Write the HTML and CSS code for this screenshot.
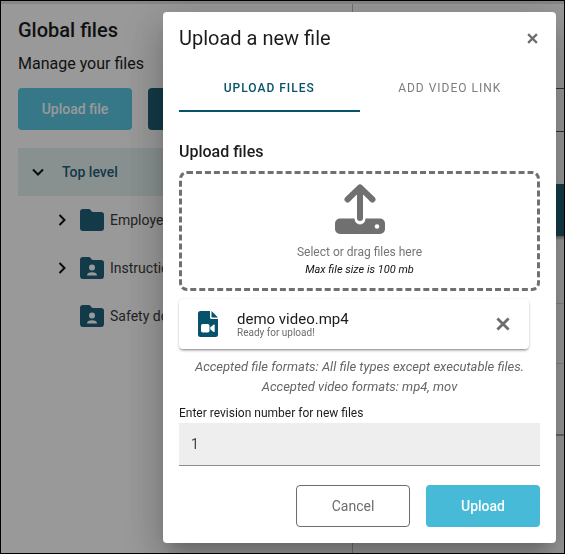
FILE: index.html
```html
<!DOCTYPE html>
<html lang="en">
<head>
<meta charset="utf-8">
<meta name="viewport" content="width=device-width, initial-scale=1">
<title>Global files</title>
<link rel="stylesheet" href="styles.css">
</head>
<body>
<div class="page">
  <aside class="sidebar">
    <h1 class="page-title">Global files</h1>
    <p class="page-subtitle">Manage your files</p>
    <div class="toolbar">
      <button class="btn btn-primary btn-page" type="button">Upload file</button>
      <button class="btn btn-dark" type="button">New folder</button>
    </div>
    <ul class="tree">
      <li class="node node-root">
        <svg class="chevron" viewBox="0 0 14 14"><path d="M2 4.500l5 5 5-5"/></svg>
        <span>Top level</span>
      </li>
      <li class="node">
        <svg class="chevron" viewBox="0 0 14 14"><path d="M4.500 2l5 5-5 5"/></svg>
        <svg class="folder" viewBox="0 0 24 22"><path d="M3 0h6.500l3 3H21a3 3 0 0 1 3 3v13a3 3 0 0 1-3 3H3a3 3 0 0 1-3-3V3a3 3 0 0 1 3-3z"/></svg>
        <span>Employees</span>
      </li>
      <li class="node">
        <svg class="chevron" viewBox="0 0 14 14"><path d="M4.500 2l5 5-5 5"/></svg>
        <svg class="folder" viewBox="0 0 24 22"><path d="M3 0h6.500l3 3H21a3 3 0 0 1 3 3v13a3 3 0 0 1-3 3H3a3 3 0 0 1-3-3V3a3 3 0 0 1 3-3z"/><circle class="cut" cx="12" cy="10.500" r="3"/><path class="cut" d="M7 18.500c0-2.300 2-3.300 5-3.300s5 1 5 3.300z"/></svg>
        <span>Instructions</span>
      </li>
      <li class="node">
        <span class="chevron"></span>
        <svg class="folder" viewBox="0 0 24 22"><path d="M3 0h6.500l3 3H21a3 3 0 0 1 3 3v13a3 3 0 0 1-3 3H3a3 3 0 0 1-3-3V3a3 3 0 0 1 3-3z"/><circle class="cut" cx="12" cy="10.500" r="3"/><path class="cut" d="M7 18.500c0-2.300 2-3.300 5-3.300s5 1 5 3.300z"/></svg>
        <span>Safety documents</span>
      </li>
    </ul>
  </aside>
  <main class="content">
    <div class="search"></div>
    <div class="file-list">
      <div class="file-head"></div>
      <div class="file-row file-row-first"></div>
      <div class="file-row"></div>
      <div class="file-foot"></div>
    </div>
  </main>
</div>

<div class="overlay">
  <form class="dialog" role="dialog" aria-labelledby="dialog-title">
    <header class="dialog-head">
      <h2 class="dialog-title" id="dialog-title">Upload a new file</h2>
      <button class="icon-btn" type="button" aria-label="Close"><svg class="cross cross-small" viewBox="0 0 10 10"><path d="M1 1l8 8M9 1l-8 8"/></svg></button>
    </header>
    <div class="tabs" role="tablist">
      <button class="tab tab-active" type="button" role="tab" aria-selected="true">UPLOAD FILES</button>
      <button class="tab" type="button" role="tab" aria-selected="false">ADD VIDEO LINK</button>
    </div>
    <h3 class="section-title">Upload files</h3>
    <button class="dropzone" type="button">
      <svg class="upload-icon" viewBox="0 0 50 50">
        <path class="tray" d="M5 34.500h14.500a5.500 6 0 0 0 11 0H45a5 5 0 0 1 5 5V45a5 5 0 0 1-5 5H5a5 5 0 0 1-5-5v-5.500a5 5 0 0 1 5-5z"/>
        <circle class="lamp" cx="42" cy="42.500" r="2.300"/>
        <path class="arrow" d="M25 34V3.500M12.500 15.500L25 3.300l12.500 12.200"/>
      </svg>
      <span class="drop-text">Select or drag files here</span>
      <span class="drop-hint">Max file size is 100 mb</span>
    </button>
    <div class="file-card">
      <svg class="file-icon" viewBox="0 0 20 26">
        <path class="sheet" d="M2.500 0H12v6.500A1.500 1.500 0 0 0 13.500 8H20v15.500a2.500 2.500 0 0 1-2.500 2.500h-15A2.500 2.500 0 0 1 0 23.500v-21A2.500 2.500 0 0 1 2.500 0z"/>
        <path class="sheet" d="M13.500 0L20 6.500h-6.500z"/>
        <rect class="lens" x="3" y="13" width="8.500" height="8.500" rx="1.800"/>
        <path class="lens" d="M12.300 16.300l3.200-2.600q1.200-.6 1.200.6v6q0 1.200-1.200.6l-3.200-2.600z"/>
      </svg>
      <div class="file-info">
        <span class="file-name">demo video.mp4</span>
        <span class="file-status">Ready for upload!</span>
      </div>
      <button class="icon-btn" type="button" aria-label="Remove file"><svg class="cross" viewBox="0 0 10 10"><path d="M1 1l8 8M9 1l-8 8"/></svg></button>
    </div>
    <p class="formats">Accepted file formats: All file types except executable files.<br>Accepted video formats: mp4, mov</p>
    <label class="field-label" for="revision">Enter revision number for new files</label>
    <input class="field" id="revision" type="text" value="1">
    <footer class="actions">
      <button class="btn btn-outline" type="button">Cancel</button>
      <button class="btn btn-primary" type="button">Upload</button>
    </footer>
  </form>
</div>
</body>
</html>
```
FILE: styles.css
```css
* { box-sizing: border-box; }

body {
  margin: 0;
  height: 100vh;
  overflow: hidden;
  font-family: Roboto, "Liberation Sans", sans-serif;
  color: #1c1c1c;
}

h1, h2, h3, p, ul { margin: 0; padding: 0; font-weight: 400; }
button, input { font: inherit; margin: 0; }
button { border: 0; background: none; padding: 0; cursor: pointer; }
svg { display: block; flex: none; }

/* Page */
.page {
  display: flex;
  height: 100vh;
  background: #fff;
  border-top: 4px solid #e3dfe5;
}

.sidebar {
  flex: 0 0 353px;
  padding: 14px 18px;
  border-right: 1px solid #bbb;
}

.page-title { font-size: 20px; line-height: 24px; font-weight: 500; }
.page-subtitle { margin-top: 10px; font-size: 16px; line-height: 24px; }
.toolbar { display: flex; gap: 16px; margin-top: 12px; }

.btn {
  width: 114px;
  height: 42px;
  border-radius: 4px;
  font-size: 14px;
  line-height: 20px;
}
.btn-primary { background: #46bad6; color: #fff; font-weight: 500; }
.btn-page { background: #5ac8e1; }
.btn-dark { background: #1f6278; color: #fff; }
.btn-outline { border: 1px solid #6d6d6d; color: #6d6d6d; }

.tree { list-style: none; margin-top: 18px; }
.node {
  display: flex;
  align-items: center;
  height: 48px;
  padding-left: 37px;
  color: #3a3a3a;
  font-size: 14px;
}
.node-root {
  gap: 17px;
  padding-left: 13px;
  background: #e4f0f0;
  color: #1f6278;
  font-weight: 500;
}
.chevron { width: 14px; height: 14px; fill: none; stroke: #111; stroke-width: 2; }
.folder { width: 24px; height: 22px; margin: 0 6px 0 11px; fill: #1f6278; }
.cut { fill: #fff; }

.content { flex: 1; padding: 84px 0 0 20px; }
.search { height: 44px; border: solid #555; border-width: 1px 0; }
.file-list { margin-top: 52px; border-bottom: 2px solid #aaa; }
.file-head { height: 52px; background: #1f6278; box-shadow: 0 2px 3px #999; }
.file-row { height: 60px; border-bottom: 1px solid #ddd; }
.file-row-first { height: 68px; }
.file-foot { height: 70px; }

/* Dialog */
.overlay {
  position: fixed;
  inset: 0;
  padding: 11px 8px 0 162px;
  background: rgba(0, 0, 0, 0.4);
  border: 1px solid #000;
}

.dialog {
  display: flex;
  flex-direction: column;
  padding: 0 16px 16px;
  background: #fff;
  border-radius: 4px;
  box-shadow: 0 11px 15px -7px rgba(0, 0, 0, 0.2), 0 20px 38px 3px rgba(0, 0, 0, 0.14), 0 9px 46px 8px rgba(0, 0, 0, 0.12);
}

.dialog-head { display: flex; align-items: center; justify-content: space-between; height: 52px; }
.dialog-title { font-size: 20px; line-height: 24px; }
.icon-btn { padding: 2px; }
.cross { width: 14px; height: 14px; fill: none; stroke: #6d6d6d; stroke-width: 2; }
.cross-small { width: 11px; height: 11px; }

.tabs { display: flex; }
.tab {
  flex: 1;
  height: 48px;
  padding-top: 2px;
  border-bottom: 2px solid transparent;
  color: #7d7d7d;
  font-size: 12px;
  letter-spacing: 1px;
}
.tab-active { border-color: #06526a; color: #06526a; font-weight: 500; }

.section-title { margin-top: 28px; font-size: 16px; line-height: 24px; font-weight: 500; }

.dropzone {
  display: flex;
  flex-direction: column;
  align-items: center;
  height: 120px;
  margin-top: 7px;
  padding-top: 10px;
  border: 3px dashed #707070;
  border-radius: 8px;
}
.upload-icon { width: 50px; height: 50px; }
.tray { fill: #707070; }
.lamp { fill: #fff; }
.arrow { fill: none; stroke: #707070; stroke-width: 6; stroke-linecap: round; stroke-linejoin: round; }
.drop-text { margin-top: 8px; color: #757575; font-size: 12px; line-height: 20px; }
.drop-hint { color: #111; font-size: 11px; line-height: 16px; font-style: italic; }

.file-card {
  display: flex;
  align-items: center;
  height: 50px;
  margin: 8px 11px 0 0;
  padding: 0 17px 0 19px;
  border-radius: 4px;
  box-shadow: 0 2px 3px -1px rgba(0, 0, 0, 0.5), 0 0 2px rgba(0, 0, 0, 0.12);
}
.file-icon { width: 20px; height: 26px; }
.sheet { fill: #06526a; }
.lens { fill: #fff; }
.file-info { display: flex; flex: 1; flex-direction: column; margin-left: 19px; }
.file-name { font-size: 15px; line-height: 16px; }
.file-status { color: #6d6d6d; font-size: 10px; line-height: 11px; }

.formats {
  margin-top: 8px;
  color: #666;
  font-size: 13px;
  line-height: 20px;
  font-style: italic;
  text-align: center;
}

.field-label { margin-top: 8px; font-size: 12px; line-height: 16px; }
.field {
  width: 100%;
  height: 43px;
  margin-top: 2px;
  padding: 0 12px;
  border: 0;
  border-bottom: 1px solid #8d8d8d;
  border-radius: 0;
  background: #eee;
  color: #444;
  font-size: 14px;
}
.actions { display: flex; justify-content: flex-end; gap: 16px; margin-top: 19px; }
```
